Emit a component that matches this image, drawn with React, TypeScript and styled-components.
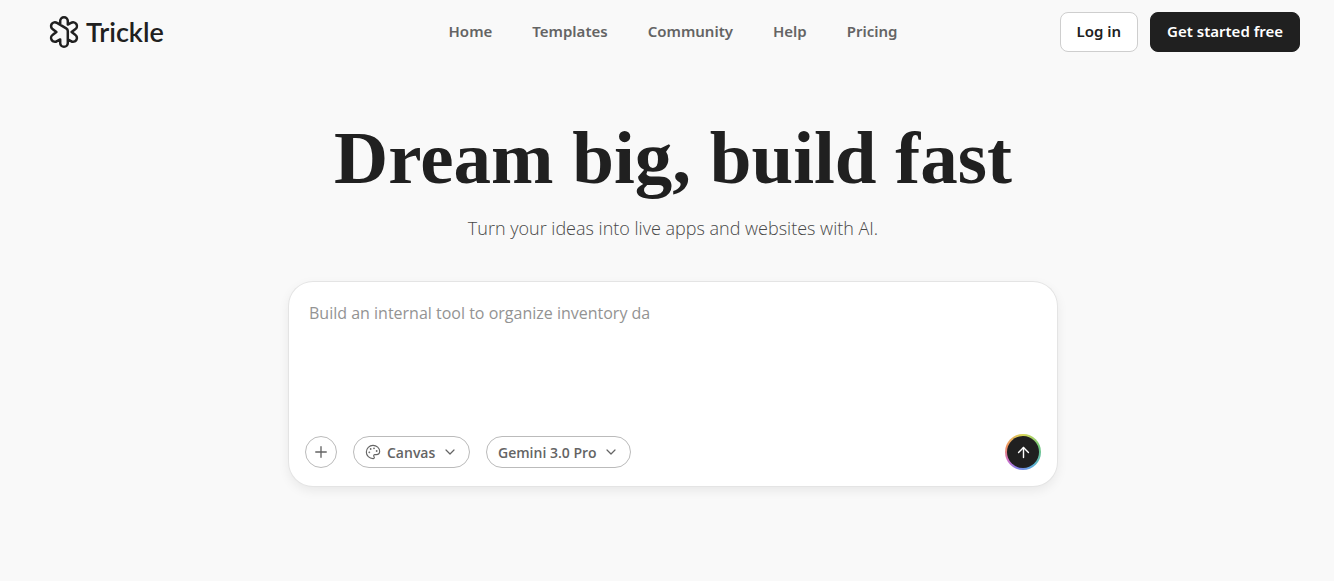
import React from "react";
import styled, { createGlobalStyle } from "styled-components";
import { ArrowUp, ChevronDown, Palette, Plus } from "lucide-react";

const sans = '"Noto Sans", "Open Sans", sans-serif';
const lightSans = '"Open Sans", "Noto Sans", sans-serif';

const GlobalStyle = createGlobalStyle`
  *, *::before, *::after { box-sizing: border-box; }
  body {
    margin: 0;
    background: #f9f9f9;
    color: #202020;
    font-family: ${sans};
  }
  button, select, textarea { font-family: inherit; }
`;

const Page = styled.div`
  padding: 0 34px 0 46px;
`;

const Header = styled.header`
  display: grid;
  grid-template-columns: 1fr auto 1fr;
  align-items: center;
  padding: 12px 0;
`;

const Brand = styled.a`
  display: flex;
  align-items: center;
  gap: 4px;
  justify-self: start;
  color: #202020;
  font-family: Lato, ${sans};
  font-size: 27px;
  font-weight: 600;
  line-height: 32px;
  text-decoration: none;
`;

const Nav = styled.nav`
  display: flex;
  gap: 40px;
`;

const NavLink = styled.a`
  color: #646464;
  font-size: 15px;
  font-weight: 600;
  line-height: 24px;
  padding-bottom: 2px;
  text-decoration: none;
`;

const Actions = styled.div`
  display: flex;
  justify-self: end;
  gap: 12px;
`;

const ActionButton = styled.button<{ $solid?: boolean }>`
  height: 40px;
  padding: 0 16px 2px;
  border: 1px solid ${({ $solid }) => ($solid ? "#202020" : "#cecece")};
  border-radius: 8px;
  background: ${({ $solid }) => ($solid ? "#202020" : "#ffffff")};
  color: ${({ $solid }) => ($solid ? "#ffffff" : "#202020")};
  font-size: 15px;
  font-weight: 600;
  white-space: nowrap;
`;

const Hero = styled.main`
  display: flex;
  flex-direction: column;
  align-items: center;
  padding: 46px 0;
`;

const Title = styled.h1`
  margin: 0;
  font-family: "Liberation Serif", serif;
  font-size: 75px;
  font-weight: 700;
  line-height: 96px;
  text-align: center;
`;

const Subtitle = styled.p`
  margin: 8px 0 40px;
  color: #484848;
  font-family: ${lightSans};
  font-size: 18px;
  font-weight: 300;
  line-height: 28px;
  text-align: center;
`;

const Composer = styled.form`
  display: flex;
  flex-direction: column;
  width: 100%;
  max-width: 768px;
  padding: 16px;
  border-radius: 24px;
  background: #ffffff;
  box-shadow: 0 0 0 1px #e4e4e4, 0 4px 12px rgba(0, 0, 0, 0.08);
`;

const Prompt = styled.textarea`
  height: 136px;
  padding: 4px;
  border: 0;
  outline: 0;
  background: transparent;
  color: #202020;
  font-family: ${lightSans};
  font-size: 16px;
  line-height: 22px;
  resize: none;
  &::placeholder { color: #939393; opacity: 1; }
`;

const Toolbar = styled.div`
  display: flex;
  align-items: center;
  gap: 16px;
`;

const RoundButton = styled.button`
  display: grid;
  place-items: center;
  width: 32px;
  height: 32px;
  padding: 0;
  border: 1px solid #bbbbbb;
  border-radius: 50%;
  background: #ffffff;
  color: #646464;
`;

const Pill = styled.label`
  display: flex;
  align-items: center;
  gap: 6px;
  height: 32px;
  padding: 0 11px;
  border: 1px solid #bbbbbb;
  border-radius: 16px;
  color: #646464;
`;

const PillSelect = styled.select`
  appearance: none;
  padding: 0;
  border: 0;
  outline: 0;
  background: transparent;
  color: inherit;
  font-family: ${lightSans};
  font-size: 14px;
  font-weight: 600;
`;

const SendButton = styled.button`
  display: grid;
  place-items: center;
  width: 36px;
  height: 36px;
  margin-left: auto;
  padding: 0;
  border: 2px solid transparent;
  border-radius: 50%;
  background:
    linear-gradient(#202020, #202020) padding-box,
    conic-gradient(#d8d858, #70c878 20%, #58b0d8 40%, #8080e8 55%, #d070c8 67%, #f09060 80%, #d8d858) border-box;
  color: #ffffff;
`;

const links = ["Home", "Templates", "Community", "Help", "Pricing"];

function Logo() {
  return (
    <svg width="36" height="36" viewBox="0 0 36 36" fill="none" stroke="currentColor" strokeWidth="2.5" strokeLinejoin="round" strokeLinecap="round" aria-hidden="true">
      <path d="M14.2 10.6V7a3.8 3.8 0 0 1 7.6 0v3.6l3.2-1.7a3.8 3.8 0 0 1 4.2 6.4L25.6 18l3.6 2.7a3.8 3.8 0 0 1-4.2 6.4l-3.2-1.7V29a3.8 3.8 0 0 1-7.6 0v-3.6L11 27.1a3.8 3.8 0 0 1-4.2-6.4L10.4 18l-3.6-2.7A3.8 3.8 0 0 1 11 8.9l9.2 5.4q1.6.9 1.6 2.6v8.5" />
    </svg>
  );
}

export default function App() {
  return (
    <>
      <GlobalStyle />
      <Page>
        <Header>
          <Brand href="#">
            <Logo />
            Trickle
          </Brand>
          <Nav>
            {links.map((link) => (
              <NavLink key={link} href="#">{link}</NavLink>
            ))}
          </Nav>
          <Actions>
            <ActionButton type="button">Log in</ActionButton>
            <ActionButton type="button" $solid>Get started free</ActionButton>
          </Actions>
        </Header>
        <Hero>
          <Title>Dream big, build fast</Title>
          <Subtitle>Turn your ideas into live apps and websites with AI.</Subtitle>
          <Composer onSubmit={(event: React.FormEvent) => event.preventDefault()}>
            <Prompt aria-label="Prompt" placeholder="Build an internal tool to organize inventory da" />
            <Toolbar>
              <RoundButton type="button" aria-label="Add">
                <Plus size={18} strokeWidth={1.8} />
              </RoundButton>
              <Pill>
                <Palette size={16} strokeWidth={1.7} />
                <PillSelect aria-label="Mode">
                  <option>Canvas</option>
                </PillSelect>
                <ChevronDown size={16} strokeWidth={1.8} />
              </Pill>
              <Pill>
                <PillSelect aria-label="Model">
                  <option>Gemini 3.0 Pro</option>
                </PillSelect>
                <ChevronDown size={16} strokeWidth={1.8} />
              </Pill>
              <SendButton type="submit" aria-label="Send">
                <ArrowUp size={17} strokeWidth={2} />
              </SendButton>
            </Toolbar>
          </Composer>
        </Hero>
      </Page>
    </>
  );
}
